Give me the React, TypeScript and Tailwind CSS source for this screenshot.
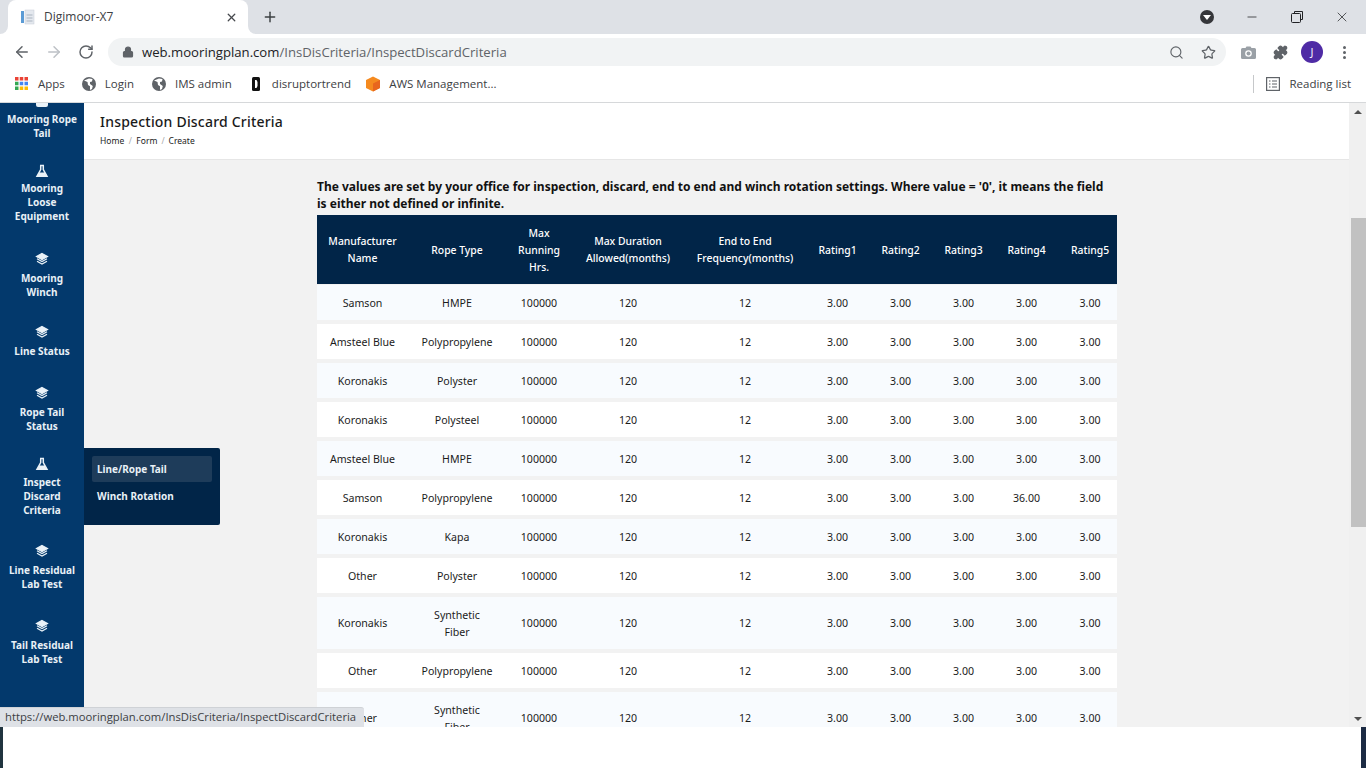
import React from "react";
import { ArrowLeft, ArrowRight, RotateCw, Lock, Search, Star, Puzzle, X, Plus, Minus } from "lucide-react";

const chrome = { fontFamily: '"Open Sans","Noto Sans",sans-serif' };

function Flask() {
  return (
    <svg width="14" height="14" viewBox="0 0 14 14" className="block" fill="none">
      <path d="M5 1.5h4M5.7 1.5v4L2 12.2h10L8.3 5.5v-4" stroke="#eaf2f8" strokeWidth="1.5" />
      <path d="M4.2 8.5h5.6L12 12.5H2z" fill="#eaf2f8" />
    </svg>
  );
}

function Layers() {
  return (
    <svg width="14" height="14" viewBox="0 0 14 14" className="block" fill="none" stroke="#eaf2f8" strokeWidth="1.2">
      <path d="M7 1.5 12.5 4.5 7 7.5 1.5 4.5z" fill="#eaf2f8" />
      <path d="M2 6.8 7 9.6 12 6.8" />
      <path d="M2 9.2 7 12 12 9.2" />
    </svg>
  );
}

function Globe() {
  return (
    <svg width="14" height="14" viewBox="0 0 14 14" className="block shrink-0">
      <circle cx="7" cy="7" r="7" fill="#5f6368" />
      <path d="M2 3.5 5.5 5 6 8l2 1.2V13l2-1 .8-3L8 7V5l2-.5L10.5 2 7 1.5z" fill="#fff" />
    </svg>
  );
}

function AppsGrid() {
  const c = ["#ea4335", "#ea4335", "#ea4335", "#34a853", "#4285f4", "#4285f4", "#34a853", "#fbbc04", "#fbbc04"];
  return (
    <svg width="13" height="13" viewBox="0 0 13 13" className="block shrink-0">
      {c.map((x, i) => (
        <rect key={i} x={(i % 3) * 4.75} y={Math.floor(i / 3) * 4.75} width="3.5" height="3.5" fill={x} />
      ))}
    </svg>
  );
}

function Bookmark({ icon, label, cls }: { icon: React.ReactNode; label: string; cls: string }) {
  return (
    <div className={`flex items-center ${cls}`}>
      {icon}
      <span className="text-[11.5px] text-[#3c4043] whitespace-nowrap" style={chrome}>{label}</span>
    </div>
  );
}

function SideItem({ icon, lines, h, mb }: { icon: React.ReactNode; lines: string[]; h: string; mb: string }) {
  return (
    <div className={`flex flex-col items-center shrink-0 ${h}`}>
      <div className={mb}>{icon}</div>
      {lines.map((l) => (
        <div key={l} className="text-[10px] leading-[14px] font-bold text-[#e8f0f6] whitespace-nowrap">{l}</div>
      ))}
    </div>
  );
}

const rows: [string, string, string][] = [
  ["Samson", "HMPE", "3.00"],
  ["Amsteel Blue", "Polypropylene", "3.00"],
  ["Koronakis", "Polyster", "3.00"],
  ["Koronakis", "Polysteel", "3.00"],
  ["Amsteel Blue", "HMPE", "3.00"],
  ["Samson", "Polypropylene", "36.00"],
  ["Koronakis", "Kapa", "3.00"],
  ["Other", "Polyster", "3.00"],
  ["Koronakis", "Synthetic Fiber", "3.00"],
  ["Other", "Polypropylene", "3.00"],
  ["Other", "Synthetic Fiber", "3.00"],
];

const headers = ["Manufacturer Name", "Rope Type", "Max Running Hrs.", "Max Duration Allowed(months)", "End to End Frequency(months)", "Rating1", "Rating2", "Rating3", "Rating4", "Rating5"];

export default function App() {
  return (
    <div className="w-[1366px] h-[768px] overflow-hidden bg-white flex flex-col relative" style={{ fontFamily: '"Noto Sans",sans-serif' }}>
      {/* tab strip */}
      <div className="h-[34px] bg-[#dee1e6] flex items-end shrink-0">
        <div className="w-[8px] h-[8px] bg-white shrink-0">
          <div className="w-[8px] h-[8px] bg-[#dee1e6] rounded-br-[8px]" />
        </div>
        <div className="w-[240px] h-[34px] bg-white rounded-t-[8px] flex items-center pl-[12px] pr-[10px] shrink-0">
          <svg width="16" height="16" viewBox="0 0 16 16" className="shrink-0">
            <rect x="1" y="2" width="3" height="12" fill="#5b9bd5" />
            <rect x="5" y="1" width="9" height="14" fill="#e4e8ee" stroke="#c5ccd6" strokeWidth="0.5" />
            <path d="M6.5 6h6M6.5 9h6M6.5 12h6" stroke="#aab4c0" strokeWidth="1" />
          </svg>
          <span className="ml-[8px] text-[12px] text-[#3c4043] flex-1" style={chrome}>Digimoor-X7</span>
          <X size={13} strokeWidth={2.4} className="text-[#45484c]" />
        </div>
        <div className="w-[8px] h-[8px] bg-white shrink-0">
          <div className="w-[8px] h-[8px] bg-[#dee1e6] rounded-bl-[8px]" />
        </div>
        <div className="ml-[6px] h-[34px] flex items-center">
          <Plus size={16} strokeWidth={2.2} className="text-[#3c4043]" />
        </div>
        <div className="flex-1" />
        <div className="h-[34px] flex items-center">
          <div className="w-[14px] h-[14px] rounded-full bg-[#35363a] flex items-center justify-center mr-[31px]">
            <div className="w-0 h-0 border-l-[4px] border-r-[4px] border-t-[5px] border-l-transparent border-r-transparent border-t-white" />
          </div>
          <Minus size={14} strokeWidth={1.3} className="text-[#202124] mr-[32px]" />
          <svg width="12" height="12" viewBox="0 0 12 12" fill="none" stroke="#202124" className="mr-[31px]">
            <path d="M3.5 2.5V.5h8v8h-2" />
            <rect x="0.5" y="2.5" width="9" height="9" rx="1" />
          </svg>
          <X size={16} strokeWidth={1.1} className="text-[#202124] mr-[16px]" />
        </div>
      </div>
      {/* toolbar */}
      <div className="h-[36px] bg-white flex items-center shrink-0">
        <ArrowLeft size={18} strokeWidth={2} className="ml-[13px] text-[#5f6368]" />
        <ArrowRight size={18} strokeWidth={2} className="ml-[14px] text-[#bdc1c6]" />
        <RotateCw size={16} strokeWidth={2.2} className="ml-[15px] text-[#5f6368]" />
        <div className="ml-[14px] w-[1118px] h-[28px] rounded-full bg-[#f1f3f4] flex items-center pl-[14px] pr-[10px] shrink-0">
          <Lock size={12} strokeWidth={2.4} className="text-[#5f6368]" fill="#5f6368" />
          <span className="ml-[8px] pt-[1px] text-[13.15px] text-[#5f6368] flex-1 whitespace-nowrap" style={chrome}>
            <span className="text-[#202124]">web.mooringplan.com</span>/InsDisCriteria/InspectDiscardCriteria
          </span>
          <Search size={15} strokeWidth={1.8} className="text-[#5f6368] mr-[17px]" />
          <Star size={15} strokeWidth={2} className="text-[#5f6368]" />
        </div>
        <svg width="15" height="13" viewBox="0 0 15 13" className="ml-[15px] shrink-0">
          <path d="M1.5 2H4.5L5.5 .5h4L10.5 2h3A1.5 1.5 0 0 1 15 3.5v8A1.5 1.5 0 0 1 13.5 13h-12A1.5 1.5 0 0 1 0 11.5v-8A1.5 1.5 0 0 1 1.5 2z" fill="#9aa0a6" />
          <circle cx="7.5" cy="7.5" r="3.3" fill="#fff" />
          <circle cx="7.5" cy="7.5" r="2" fill="#9aa0a6" />
        </svg>
        <Puzzle size={15} fill="#5f6368" className="ml-[17px] text-[#5f6368]" />
        <div className="ml-[13px] w-[22px] h-[22px] rounded-full bg-[#4f2ba5] text-white text-[11px] flex items-center justify-center" style={chrome}>J</div>
        <div className="ml-[20px] flex flex-col gap-[2px]">
          <span className="w-[3px] h-[3px] rounded-full bg-[#5f6368]" />
          <span className="w-[3px] h-[3px] rounded-full bg-[#5f6368]" />
          <span className="w-[3px] h-[3px] rounded-full bg-[#5f6368]" />
        </div>
      </div>
      {/* bookmarks */}
      <div className="h-[33px] bg-white border-b border-[#d6d8da] flex items-center shrink-0 pb-[5px]">
        <Bookmark cls="ml-[15px] gap-[10px]" icon={<AppsGrid />} label="Apps" />
        <Bookmark cls="ml-[17px] gap-[9px]" icon={<Globe />} label="Login" />
        <Bookmark cls="ml-[18px] gap-[9px]" icon={<Globe />} label="IMS admin" />
        <Bookmark cls="ml-[20px] gap-[12px]" icon={
          <svg width="8" height="14" viewBox="0 0 8 14" className="block shrink-0"><rect width="8" height="14" rx="1.5" fill="#111" /><path d="M3 3h1.5L5.5 5v4L4.5 11H3z" fill="#fff" /></svg>
        } label="disruptortrend" />
        <Bookmark cls="ml-[14px] gap-[8px]" icon={
          <svg width="16" height="16" viewBox="0 0 16 16" className="block shrink-0"><path d="M8 .5 15 4v8l-7 3.5L1 12V4z" fill="#f58a1f" /><path d="M8 7.5 15 4v8l-7 3.5z" fill="#e8661e" /></svg>
        } label="AWS Management..." />
        <div className="flex-1" />
        <div className="w-px h-[18px] bg-[#c6c8ca]" />
        <svg width="14" height="14" viewBox="0 0 14 14" fill="none" stroke="#5f6368" className="ml-[12px]" strokeWidth="1.2">
          <rect x="0.6" y="0.6" width="12.8" height="12.8" />
          <path d="M3 4h1.5M6 4h5M3 7h1.5M6 7h5M3 10h1.5M6 10h5" />
        </svg>
        <span className="ml-[9px] mr-[15px] text-[11.5px] text-[#3c4043]" style={chrome}>Reading list</span>
      </div>

      {/* viewport */}
      <div className="h-[624px] shrink-0 flex relative overflow-hidden bg-[#f2f2f2]">
        {/* sidebar */}
        <aside className="w-[84px] shrink-0 bg-[#03396c] flex flex-col overflow-hidden">
          <div className="-mt-[10px] flex flex-col">
            <SideItem h="h-[71px]" mb="mb-[5px]" icon={<div className="w-[12px] h-[14px] bg-[#eaf2f8] rounded-b-[2px]" />} lines={["Mooring Rope", "Tail"]} />
            <SideItem h="h-[88px]" mb="mb-[3px]" icon={<Flask />} lines={["Mooring", "Loose", "Equipment"]} />
            <SideItem h="h-[73px]" mb="mb-[5px]" icon={<Layers />} lines={["Mooring", "Winch"]} />
            <SideItem h="h-[61px]" mb="mb-[5px]" icon={<Layers />} lines={["Line Status"]} />
            <SideItem h="h-[71px]" mb="mb-[5px]" icon={<Layers />} lines={["Rope Tail", "Status"]} />
            <SideItem h="h-[87px]" mb="mb-[4px]" icon={<Flask />} lines={["Inspect", "Discard", "Criteria"]} />
            <SideItem h="h-[75px]" mb="mb-[5px]" icon={<Layers />} lines={["Line Residual", "Lab Test"]} />
            <SideItem h="h-[75px]" mb="mb-[5px]" icon={<Layers />} lines={["Tail Residual", "Lab Test"]} />
          </div>
        </aside>

        {/* main */}
        <div className="flex-1 min-w-0 flex flex-col">
          <div className="h-[57px] shrink-0 bg-white border-b border-[#e6e6e6] pl-[16px] pt-[9px]">
            <div className="text-[14px] leading-[20px] font-medium text-[#1a1a1a] tracking-[0.2px]">Inspection Discard Criteria</div>
            <div className="flex items-center mt-[3px] text-[8.5px] leading-[12px] text-[#222]">
              <span>Home</span><span className="mx-[4.5px] text-[#aaa]">/</span>
              <span>Form</span><span className="mx-[4px] text-[#aaa]">/</span>
              <span>Create</span>
            </div>
          </div>
          <div className="flex-1 pl-[233px] pt-[18px]">
            <p className="w-[795px] text-[12px] leading-[17px] font-bold text-[#111]">
              The values are set by your office for inspection, discard, end to end and winch rotation settings. Where value = '0', it means the field is either not defined or infinite.
            </p>
            <table className="w-[800px] table-fixed border-separate border-spacing-0 mt-[3px] text-center text-[10.6px] text-[#1c1c1c]">
              <colgroup>
                {[91, 98, 66, 112, 122, 63, 63, 63, 63, 59].map((w, i) => (
                  <col key={i} style={{ width: w }} />
                ))}
              </colgroup>
              <thead>
                <tr className="bg-[#012548] text-white h-[70px]">
                  {headers.map((h, i) => (
                    <th key={h} className={`font-medium text-[10.4px] leading-[17px] pt-[1px] border-b border-[#f2f2f2] ${i === 0 ? "px-[8px]" : i === 2 ? "px-[12px]" : i === 3 ? "px-[2px]" : i === 4 ? "px-[4px]" : i === 9 ? "pl-[5px] whitespace-nowrap" : "px-0"}`}>{h}</th>
                  ))}
                </tr>
              </thead>
              <tbody>
                {rows.map((r, ri) => {
                  const tall = r[1] === "Synthetic Fiber";
                  const bg = ri % 2 === 0 ? "bg-[#f8fbfe]" : "bg-white";
                  const cls = `${bg} border-b-[4px] border-[#f2f2f2] ${tall ? "h-[56px]" : "h-[39px] pt-[1px]"}`;
                  const vals = [r[0], r[1], "100000", "120", "12", "3.00", "3.00", "3.00", r[2], "3.00"];
                  return (
                    <tr key={ri}>
                      {vals.map((v, i) => (
                        <td key={i} className={`${cls} leading-[17px] ${i === 1 ? (tall ? "px-[20px] pt-[2px]" : "px-0") : ""} ${i === 9 ? "pl-[5px]" : ""}`}>{v}</td>
                      ))}
                    </tr>
                  );
                })}
              </tbody>
            </table>
          </div>
        </div>

        {/* scrollbar */}
        <div className="w-[17px] shrink-0 bg-[#f0f0f0] flex flex-col items-center pt-[7px]">
          <div className="w-0 h-0 border-l-[4px] border-r-[4px] border-b-[4px] border-l-transparent border-r-transparent border-b-[#505050] shrink-0 ml-[1px]" />
          <div className="h-[104px] shrink-0" />
          <div className="w-[15px] h-[309px] ml-[2px] bg-[#c1c1c1] shrink-0" />
          <div className="flex-1" />
          <div className="w-0 h-0 border-l-[4px] border-r-[4px] border-t-[4px] border-l-transparent border-r-transparent border-t-[#505050] mb-[6px] ml-[1px]" />
        </div>

        {/* flyout */}
        <div className="absolute left-[84px] top-[345px] w-[136px] h-[77px] bg-[#012548] rounded-r-[2px] px-[8px] pt-[8px] font-bold text-[10px] text-[#e8f0f6]">
          <div className="h-[26px] bg-[#1e3c5a] rounded-[2px] flex items-center px-[5px]">Line/Rope Tail</div>
          <div className="h-[27px] mt-[1px] flex items-center px-[5px]">Winch Rotation</div>
        </div>

        {/* status bubble */}
        <div className="absolute left-0 bottom-0 w-[364px] h-[20px] bg-[#dee1e6] border-t border-[#cfd2d6] rounded-tr-[3px] flex items-center pl-[5px] text-[11.27px] text-[#3c4043] whitespace-nowrap" style={chrome}>
          https://web.mooringplan.com/InsDisCriteria/InspectDiscardCriteria
        </div>
      </div>

      {/* bottom white strip */}
      <div className="flex-1 flex justify-between bg-white">
        <div className="w-[3px] bg-[#20343f]" />
        <div className="w-[5px] bg-[#1c2b44]" />
      </div>
    </div>
  );
}
